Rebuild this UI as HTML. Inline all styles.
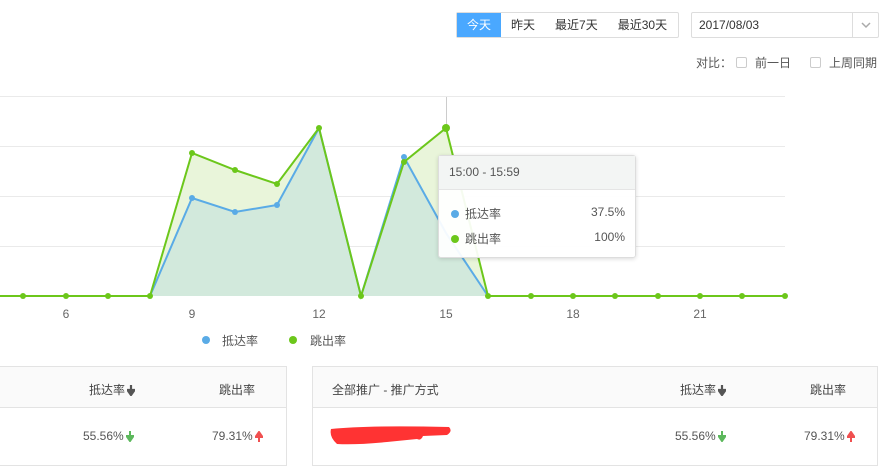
<!DOCTYPE html>
<html><head><meta charset="utf-8"><style>
*{margin:0;padding:0;box-sizing:border-box}
body{width:890px;height:463px;overflow:hidden;background:#fff;font-family:"Liberation Sans","Noto Sans CJK SC",sans-serif;font-size:12px;color:#333;position:relative}
.btns{position:absolute;left:456px;top:12px;height:26px;border:1px solid #ddd;display:flex;border-radius:2px}
.btns div{padding:0 10px;line-height:24px;font-size:12px}
.btns .on{background:#4aa8ff;color:#fff;padding:0 10px}
.date{position:absolute;left:691px;top:12px;width:188px;height:26px;border:1px solid #ddd;border-radius:2px;line-height:24px;padding-left:7px}
.date .ar{position:absolute;right:0;top:0;width:26px;height:24px;border-left:1px solid #ddd}
.cmp{position:absolute;top:54px;font-size:12px;color:#555}
.cb{display:inline-block;width:11px;height:11px;border:1px solid #ccc;border-radius:2px;vertical-align:-1px;margin:0 8px 0 4px}
.card{position:absolute;top:366px;height:100px;border:1px solid #e3e3e3;background:#fff}
.hd{height:41px;background:#fafafa;border-bottom:1px solid #e3e3e3;position:relative}
.t{position:absolute;font-size:12px;color:#444}
.ar2{display:inline-block;vertical-align:-2px;margin-left:2px}
</style></head><body>
<div class="btns"><div class="on">今天</div><div>昨天</div><div>最近7天</div><div style="padding-right:11px">最近30天</div></div>
<div class="date">2017/08/03<div class="ar"><svg width="26" height="24"><polyline points="9,10 13,14 17,10" fill="none" stroke="#aaa" stroke-width="1.5"/></svg></div></div>
<div class="cmp" style="left:696px">对比：<span class="cb"></span>前一日</div>
<div class="cmp" style="left:810px"><span class="cb" style="margin-left:0"></span>上周同期</div>

<svg width="890" height="350" style="position:absolute;left:0;top:0" font-family="Liberation Sans, Noto Sans CJK SC, sans-serif">
<g stroke="#eaeaea" stroke-width="1">
<line x1="0" y1="96.5" x2="785" y2="96.5"/><line x1="0" y1="146.5" x2="785" y2="146.5"/><line x1="0" y1="196.5" x2="785" y2="196.5"/><line x1="0" y1="246.5" x2="785" y2="246.5"/>
</g>
<line x1="446.5" y1="97" x2="446.5" y2="296" stroke="#ccc"/>
<polygon fill="#e9f5da" points="150,296 192,153 235,170 277,184 319,128 361,296 404,162 446,128 488,296"/>
<polygon fill="#d2e9dc" points="150,296 192,198 235,212 277,205 319,128 361,296 404,157 446,233 488,296"/>
<polyline fill="none" stroke="#5aabe6" stroke-width="2" points="150,296 192,198 235,212 277,205 319,128 361,296 404,157 446,233 488,296"/>
<polyline fill="none" stroke="#6cc71b" stroke-width="2" points="0,296 150,296 192,153 235,170 277,184 319,128 361,296 404,162 446,128 488,296 785,296"/>
<g fill="#5aabe6"><circle cx="192" cy="198" r="3"/><circle cx="235" cy="212" r="3"/><circle cx="277" cy="205" r="3"/><circle cx="404" cy="157" r="3"/></g>
<g fill="#6cc71b"><circle cx="23" cy="296" r="3"/><circle cx="66" cy="296" r="3"/><circle cx="108" cy="296" r="3"/><circle cx="150" cy="296" r="3"/><circle cx="192" cy="153" r="3"/><circle cx="235" cy="170" r="3"/><circle cx="277" cy="184" r="3"/><circle cx="319" cy="128" r="3"/><circle cx="361" cy="296" r="3"/><circle cx="404" cy="162" r="3"/><circle cx="446" cy="128" r="4"/><circle cx="488" cy="296" r="3"/><circle cx="531" cy="296" r="3"/><circle cx="573" cy="296" r="3"/><circle cx="615" cy="296" r="3"/><circle cx="658" cy="296" r="3"/><circle cx="700" cy="296" r="3"/><circle cx="742" cy="296" r="3"/><circle cx="785" cy="296" r="3"/></g>
<g font-size="12" fill="#666" text-anchor="middle">
<text x="66" y="318">6</text><text x="192" y="318">9</text><text x="319" y="318">12</text><text x="446" y="318">15</text><text x="573" y="318">18</text><text x="700" y="318">21</text>
</g>
<circle cx="206" cy="340" r="4" fill="#5aabe6"/><text x="222" y="345" font-size="12" fill="#555">抵达率</text>
<circle cx="293" cy="340" r="4" fill="#6cc71b"/><text x="310" y="345" font-size="12" fill="#555">跳出率</text>
</svg>

<div style="position:absolute;left:438px;top:155px;width:198px;height:103px;background:rgba(255,255,255,0.93);border:1px solid #ddd;border-radius:3px;box-shadow:0 1px 4px rgba(0,0,0,.15);font-size:12px;color:#555">
<div style="height:34px;background:#f3f5f4;border-bottom:1px solid #e5e5e5;line-height:33px;padding-left:10px">15:00 - 15:59</div>
<div style="position:absolute;top:49px;left:12px"><span style="display:inline-block;width:8px;height:8px;border-radius:50%;background:#5aabe6;margin-right:6px"></span>抵达率</div>
<div style="position:absolute;top:49px;right:10px">37.5%</div>
<div style="position:absolute;top:74px;left:12px"><span style="display:inline-block;width:8px;height:8px;border-radius:50%;background:#6cc71b;margin-right:6px"></span>跳出率</div>
<div style="position:absolute;top:74px;right:10px">100%</div>
</div>

<div class="card" style="left:-2px;width:289px">
<div class="hd"><span class="t" style="left:90px;top:14px">抵达率<svg class="ar2" width="8" height="11"><path d="M4 0V7M0.5 5L4 10 7.5 5Z" stroke="#555" stroke-width="2.2" fill="#555"/></svg></span><span class="t" style="left:220px;top:14px">跳出率</span></div>
<span class="t" style="left:84px;top:62px;color:#555">55.56%<svg class="ar2" width="8" height="11"><path d="M4 0V7M0.5 5L4 10 7.5 5Z" stroke="#5cb85c" stroke-width="2" fill="#5cb85c"/></svg></span>
<span class="t" style="left:213px;top:62px;color:#555">79.31%<svg class="ar2" width="8" height="11"><path d="M4 11V4M0.5 6L4 1 7.5 6Z" stroke="#f05050" stroke-width="2" fill="#f05050"/></svg></span>
</div>
<div class="card" style="left:312px;width:566px">
<div class="hd"><span class="t" style="top:14px;left:19px">全部推广 - 推广方式</span><span class="t" style="left:367px;top:14px">抵达率<svg class="ar2" width="8" height="11"><path d="M4 0V7M0.5 5L4 10 7.5 5Z" stroke="#555" stroke-width="2.2" fill="#555"/></svg></span><span class="t" style="left:497px;top:14px">跳出率</span></div>
<svg style="position:absolute;left:14px;top:56px" width="126" height="30"><path d="M4 6 Q40 2 122 4 Q126 8 120 12 L96 13 Q94 18 90 16 L60 19 Q30 22 10 21 Q2 14 4 6Z" fill="#f33"/></svg>
<span class="t" style="left:362px;top:62px;color:#555">55.56%<svg class="ar2" width="8" height="11"><path d="M4 0V7M0.5 5L4 10 7.5 5Z" stroke="#5cb85c" stroke-width="2" fill="#5cb85c"/></svg></span>
<span class="t" style="left:491px;top:62px;color:#555">79.31%<svg class="ar2" width="8" height="11"><path d="M4 11V4M0.5 6L4 1 7.5 6Z" stroke="#f05050" stroke-width="2" fill="#f05050"/></svg></span>
</div>
</body></html>
